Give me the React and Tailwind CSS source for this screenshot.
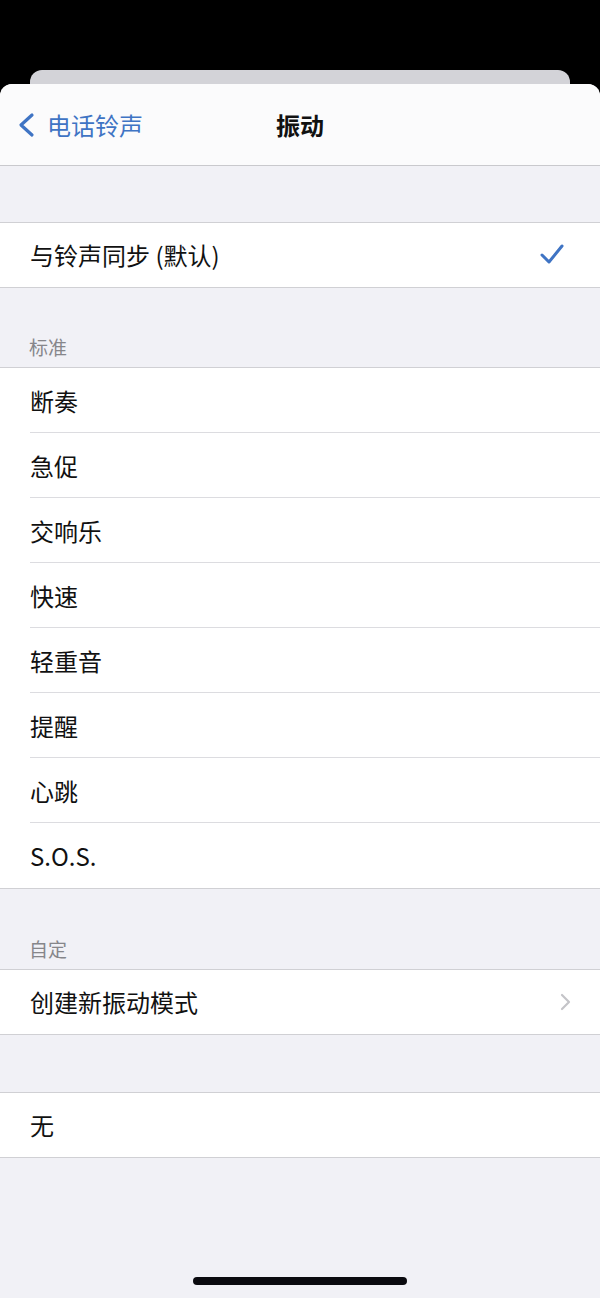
const FONT = { fontFamily: '"Noto Sans CJK SC", "Noto Sans", sans-serif' };

const STANDARD = ["断奏", "急促", "交响乐", "快速", "轻重音", "提醒", "心跳", "S.O.S."];

function Row({ label, last, right, h = "h-[65px]" }) {
  return (
    <div className={`${h} flex items-center pl-[30px] relative bg-white`}>
      <div className="flex-1 flex items-center h-full pr-[30px]">
        <span className="text-[24px] text-[#111] leading-none">{label}</span>
        <div className="ml-auto">{right}</div>
      </div>
      {!last && <div className="absolute left-[30px] right-0 bottom-0 h-px bg-[#dcdce0]" />}
    </div>
  );
}

function Check() {
  return (
    <svg width="28" height="24" viewBox="0 0 28 24" className="mr-[4px]">
      <path d="M4 12 L11 19 L24 3" fill="none" stroke="#3f74c4" strokeWidth="3" strokeLinecap="round" strokeLinejoin="round" />
    </svg>
  );
}

function Chevron() {
  return (
    <svg width="14" height="20" viewBox="0 0 14 20" className="mr-[-2px]">
      <path d="M4 3 L11 10 L4 17" fill="none" stroke="#c4c4c8" strokeWidth="2.2" strokeLinecap="round" strokeLinejoin="round" />
    </svg>
  );
}

function Header({ children, h = "h-[79px]" }) {
  return (
    <div className={`${h} shrink-0 flex items-end pl-[29px] pb-[11px]`}>
      <span className="text-[19px] text-[#86868a] leading-none">{children}</span>
    </div>
  );
}

export default function App() {
  return (
    <div className="w-[600px] h-[1298px] bg-black flex flex-col overflow-hidden" style={FONT}>
      <div className="h-[70px] shrink-0" />
      <div className="mx-[30px] h-[14px] bg-[#d3d3d8] rounded-t-[12px] shrink-0" />
      <div className="flex-1 bg-[#f1f1f6] rounded-t-[12px] flex flex-col overflow-hidden">
        {/* nav bar */}
        <div className="h-[82px] shrink-0 bg-[#fbfbfc] border-b border-[#c9c9cd] relative flex items-center">
          <div className="flex items-center pl-[17px] text-[#3f74c4]">
            <svg width="18" height="26" viewBox="0 0 18 26">
              <path d="M15 3 L4 13 L15 23" fill="none" stroke="#3f74c4" strokeWidth="3.2" strokeLinecap="round" strokeLinejoin="round" />
            </svg>
            <span className="ml-[12px] text-[24px] leading-none">电话铃声</span>
          </div>
          <div className="absolute inset-0 flex items-center justify-center pointer-events-none">
            <span className="text-[24px] font-bold text-[#111] leading-none">振动</span>
          </div>
        </div>

        <div className="h-[56px] shrink-0" />
        <div className="border-y border-[#d0d0d4]">
          <Row label="与铃声同步 (默认)" last h="h-[64px]" right={<Check />} />
        </div>

        <Header>标准</Header>
        <div className="border-y border-[#d0d0d4]">
          {STANDARD.map((s, i) => (
            <Row key={s} label={s} last={i === STANDARD.length - 1} />
          ))}
        </div>

        <Header h="h-[80px]">自定</Header>
        <div className="border-y border-[#d0d0d4]">
          <Row label="创建新振动模式" last h="h-[64px]" right={<Chevron />} />
        </div>

        <div className="h-[57px] shrink-0" />
        <div className="border-y border-[#d0d0d4]">
          <Row label="无" last h="h-[64px]" />
        </div>

        <div className="flex-1 flex items-end justify-center pb-[13px]">
          <div className="w-[214px] h-[8px] rounded-full bg-[#0a0a0f]" />
        </div>
      </div>
    </div>
  );
}
